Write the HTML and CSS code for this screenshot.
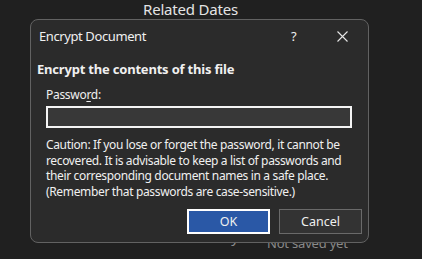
FILE: index.html
```html
<!DOCTYPE html>
<html>
<head>
<meta charset="utf-8">
<link rel="stylesheet" href="styles.css">
</head>
<body>
<div class="page">
  <div class="bg-title">Related Dates</div>
  <div class="bg-row">
    <span class="bg-label">Last Modified By</span>
    <span class="bg-value">Not saved yet</span>
  </div>
</div>
<div class="dialog">
  <div class="titlebar">
    <span class="title">Encrypt Document</span>
    <span class="help">?</span>
    <span class="close">
      <svg width="11" height="11" viewBox="0 0 11 11"><path d="M0.5 0.5 L10.5 10.5 M10.5 0.5 L0.5 10.5" stroke="#e6e6e6" stroke-width="1.1" fill="none"/></svg>
    </span>
  </div>
  <div class="content">
    <div class="heading">Encrypt the contents of this file</div>
    <div class="field">
      <div class="label">Passwo<u>r</u>d:</div>
      <div class="input"></div>
      <p class="caution">Caution: If you lose or forget the password, it cannot be<br>recovered. It is advisable to keep a list of passwords and<br>their corresponding document names in a safe place.<br>(Remember that passwords are case-sensitive.)</p>
    </div>
    <div class="buttons">
      <div class="btn ok">OK</div>
      <div class="btn cancel">Cancel</div>
    </div>
  </div>
</div>
</body>
</html>
```

FILE: styles.css
```css
html, body {
  margin: 0;
  padding: 0;
}
body {
  width: 422px;
  height: 259px;
  overflow: hidden;
  background: #202020;
  position: relative;
  font-family: "Noto Sans", "Open Sans", sans-serif;
  color: #f0f0f0;
}
.page {
  display: flex;
  flex-direction: column;
  height: 259px;
}
.bg-title {
  font-size: 15px;
  line-height: 20px;
  margin-top: -1px;
  padding-left: 143px;
  letter-spacing: -0.2px;
  color: #e4e4e4;
}
.bg-row {
  margin-top: 207px;
  display: flex;
  align-items: flex-start;
  line-height: 20px;
  color: #8a8a8a;
}
.bg-label {
  width: 239px;
  text-align: right;
  font-size: 15px;
}
.bg-value {
  margin-left: 28px;
  margin-top: 7px;
  font-size: 13px;
  letter-spacing: -0.2px;
}
.dialog {
  position: absolute;
  left: 30px;
  top: 19px;
  width: 339px;
  height: 224px;
  box-sizing: border-box;
  border: 1px solid #626262;
  border-radius: 8px;
  background: #2b2b2b;
  display: flex;
  flex-direction: column;
}
.titlebar {
  height: 32px;
  display: flex;
  align-items: center;
  padding-left: 8px;
  font-size: 13px;
}
.title {
  flex: 1;
  letter-spacing: -0.4px;
}
.help {
  width: 12px;
  margin-right: 34px;
  font-size: 13px;
}
.close {
  display: flex;
  margin-right: 20px;
}
.content {
  padding: 8px 0 0 6px;
  display: flex;
  flex-direction: column;
}
.heading {
  font-weight: bold;
  font-size: 13px;
  line-height: 18px;
  letter-spacing: -0.2px;
}
.field {
  padding-left: 9px;
  margin-top: 9px;
}
.label {
  font-size: 12px;
  line-height: 16px;
  letter-spacing: -0.3px;
}
.label u {
  text-underline-offset: 2px;
}
.input {
  margin-top: 3px;
  width: 306px;
  height: 22px;
  box-sizing: border-box;
  border: 2px solid #f4f4f4;
  background: #383838;
}
.caution {
  margin: 9px 0 0 0;
  font-size: 12px;
  line-height: 15.6px;
  letter-spacing: -0.35px;
  color: #f0f0f0;
}
.buttons {
  display: flex;
  justify-content: flex-end;
  gap: 9px;
  margin-top: 10px;
  padding-right: 6px;
}
.btn {
  width: 83px;
  height: 25px;
  box-sizing: border-box;
  display: flex;
  align-items: center;
  justify-content: center;
  font-size: 12.5px;
}
.ok {
  background: #2a58a6;
  border: 2px solid #ffffff;
}
.cancel {
  background: #333333;
  border: 1px solid #6a6a6a;
}
```
